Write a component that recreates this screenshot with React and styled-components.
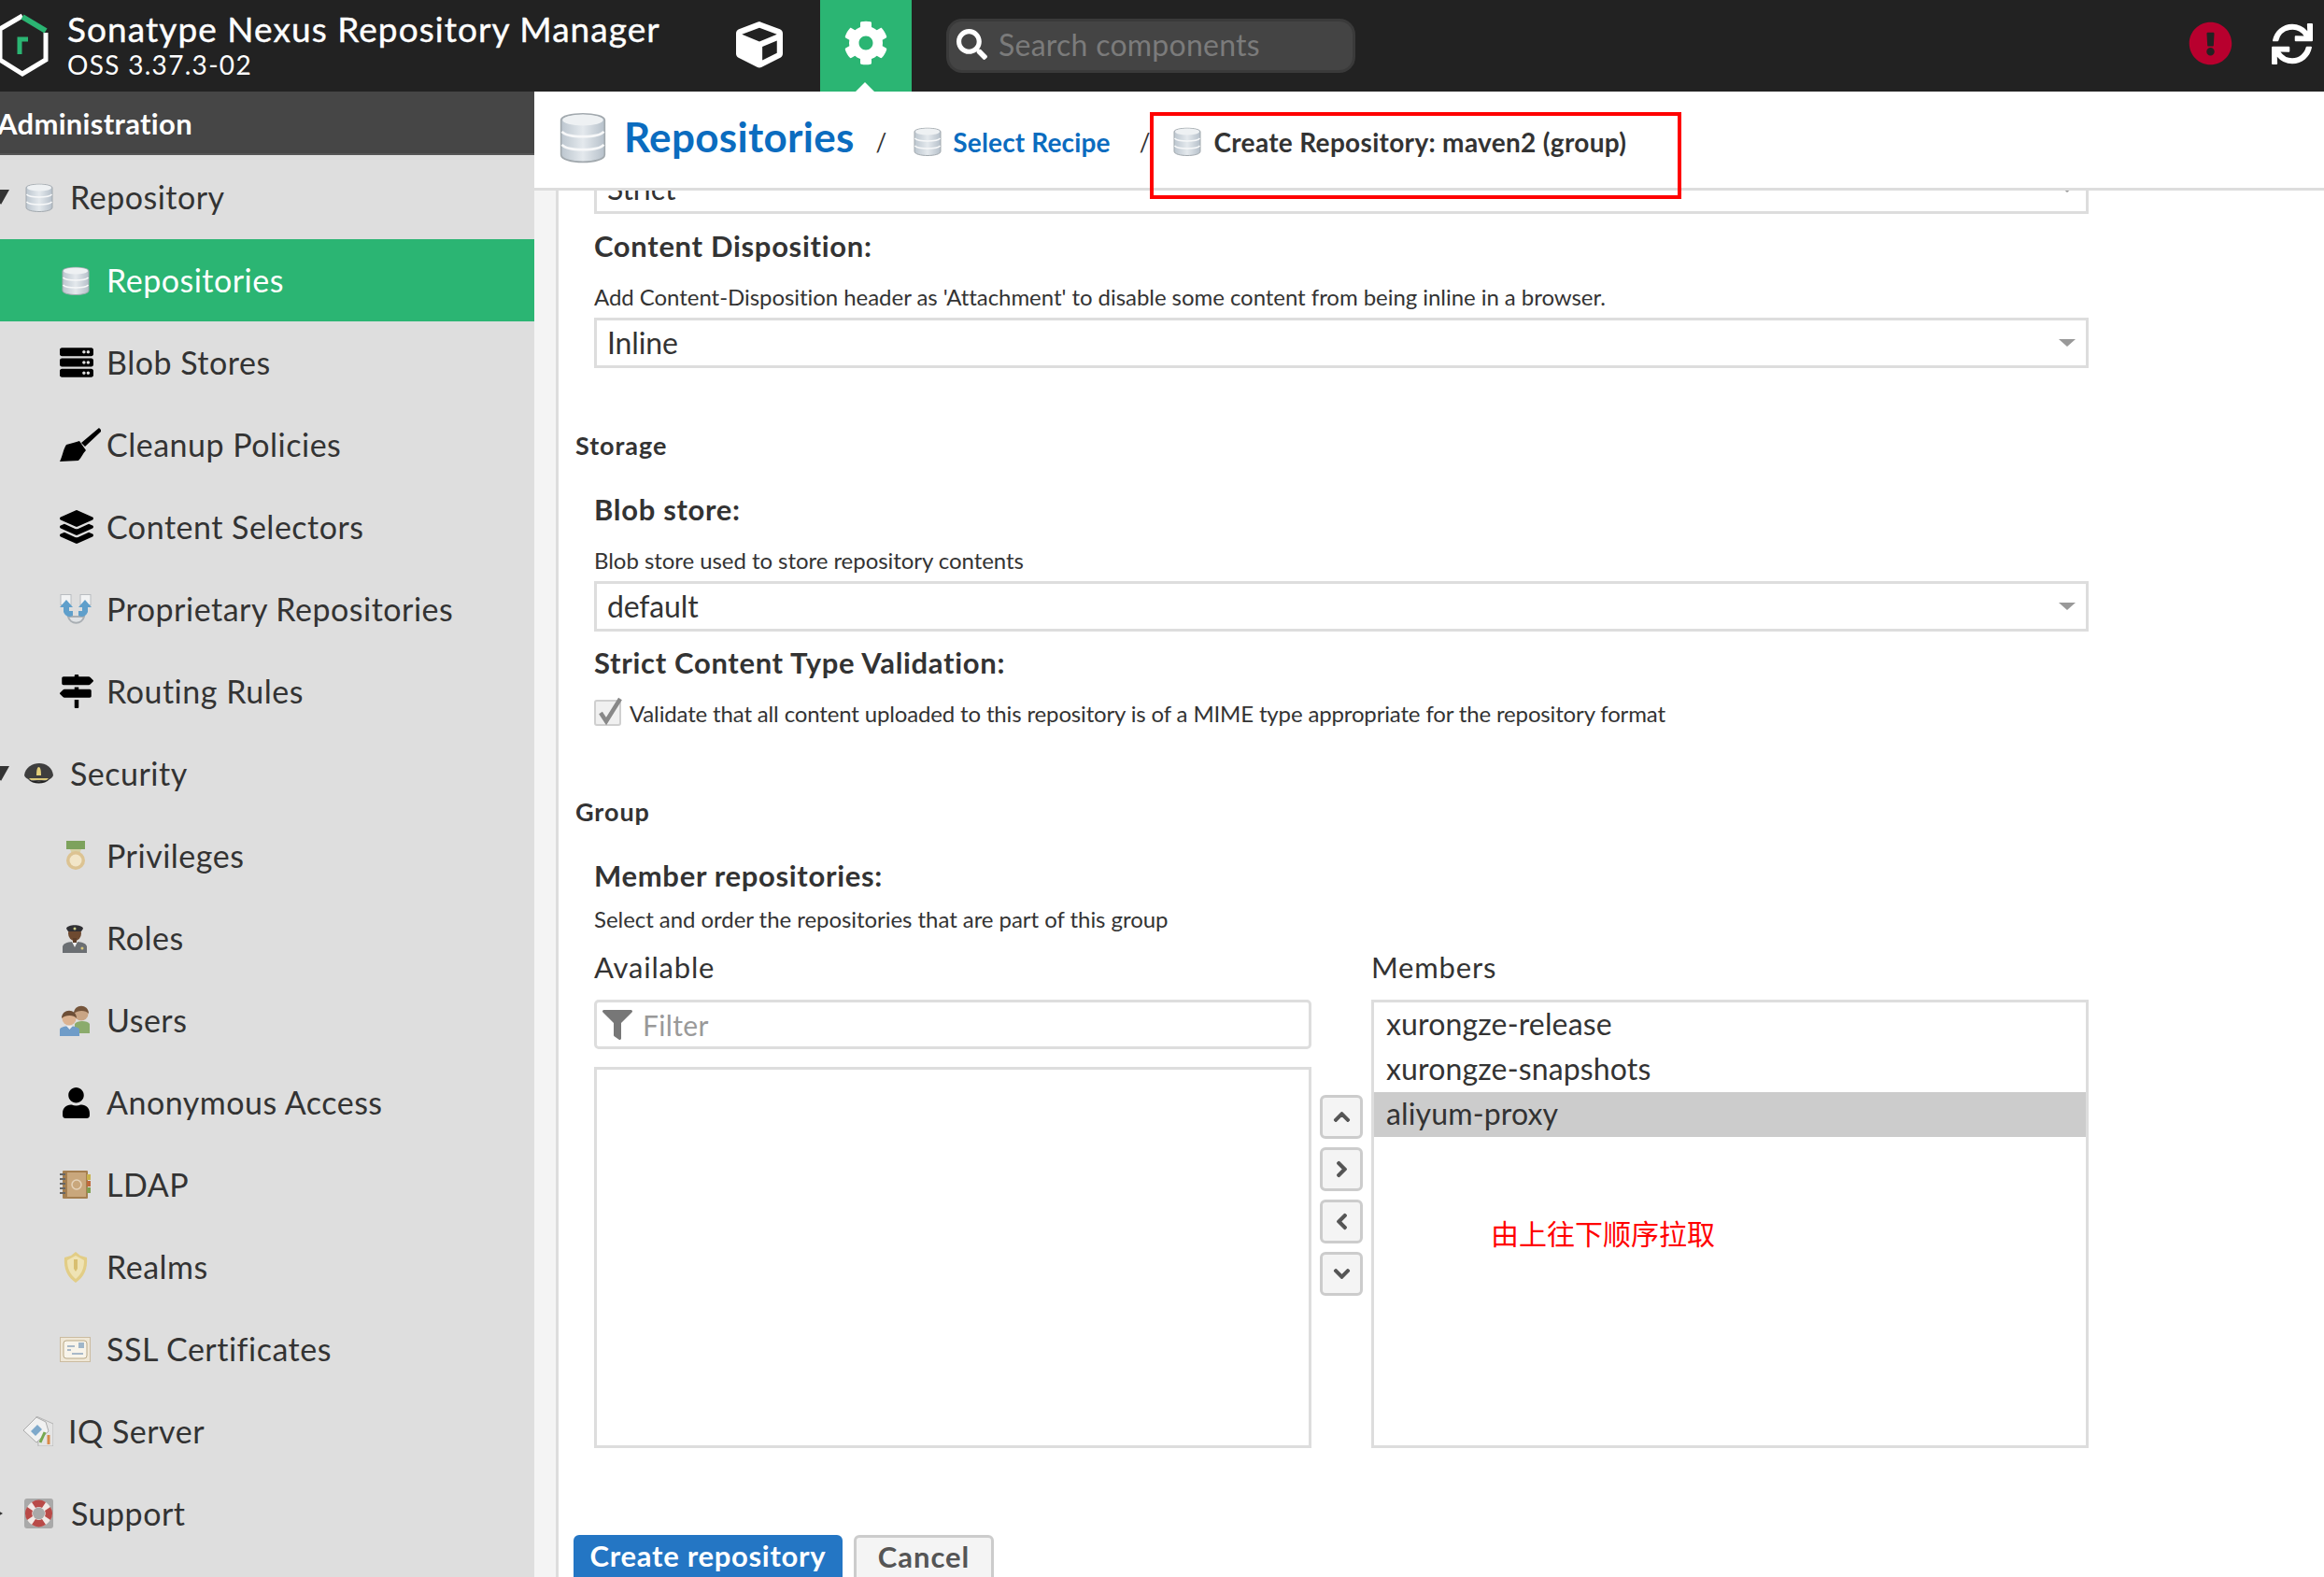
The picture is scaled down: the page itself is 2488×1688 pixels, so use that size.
import React from "react";
import styled, { createGlobalStyle } from "styled-components";
import {
  FaCube, FaCog, FaSearch, FaExclamationCircle, FaSync, FaFilter, FaServer,
  FaLayerGroup, FaMapSigns, FaUser, FaChevronUp, FaChevronDown, FaChevronLeft, FaChevronRight,
} from "react-icons/fa";

const FONT = `Lato, "Noto Sans CJK SC", sans-serif`;

const Global = createGlobalStyle`
  html, body { margin: 0; padding: 0; width: 2488px; height: 1688px; overflow: hidden; background: #fff; }
  body { font-family: ${FONT}; color: #333; }
  #root { width: 2488px; height: 1688px; }
  * { box-sizing: border-box; }
`;

const Page = styled.div`
  position: relative; width: 2488px; height: 1688px; display: flex; flex-direction: column; overflow: hidden;
`;
const TopBar = styled.header`
  height: 98px; flex: none; background: #222; display: flex; align-items: center; color: #fff;
`;
const Brand = styled.div`
  width: 785px; display: flex; align-items: center; gap: 17px; margin-left: -3px; flex: none;
`;
const BrandText = styled.div`
  display: flex; flex-direction: column; margin-top: -6px;
`;
const BrandTitle = styled.div`
  font-size: 37px; line-height: 46px; letter-spacing: 1.06px; font-weight: 400; -webkit-text-stroke: 0.4px #fff;
`;
const BrandVersion = styled.div`
  font-size: 28px; line-height: 30px; letter-spacing: 1.3px;
`;
const NavCube = styled.div`
  width: 93px; height: 98px; display: flex; align-items: center; justify-content: center; font-size: 50px; margin: 0 19px 0 -16px; padding-bottom: 2px;
`;
const NavGear = styled.div`
  position: relative; width: 98px; height: 98px; background: #2bb573; display: flex; align-items: center; justify-content: center;
  font-size: 48px; padding-bottom: 6px;
  &::after {
    content: ""; position: absolute; left: 38px; bottom: 0; border-left: 10px solid transparent; border-right: 10px solid transparent; border-bottom: 10px solid #fff;
  }
`;
const Search = styled.div`
  margin: -1px 0 0 37px; width: 438px; height: 58px; background: #444; border: 3px solid #3a3a3a; border-radius: 17px;
  display: flex; align-items: center; padding: 0 0 2px 8px; gap: 12px; font-size: 32px; color: #7b7b7b; letter-spacing: 0.25px;
  svg { color: #fff; flex: none; }
`;
const TopRight = styled.div`
  margin-left: auto; display: flex; align-items: center; gap: 42px; padding: 0 12px 5px 0;
`;
const AlertIcon = styled(FaExclamationCircle)`
  color: #b8002e; width: 47px; height: 47px; display: block;
`;
const SyncIcon = styled(FaSync)`
  color: #fff; width: 44px; height: 44px; display: block;
`;

const Body = styled.div`
  flex: 1; display: flex; min-height: 0;
`;
const Sidebar = styled.nav`
  width: 572px; flex: none; background: #dedede; overflow: hidden;
`;
const SideHead = styled.div`
  height: 68px; background: #464646; border-bottom: 2px solid #555; color: #fff; font-size: 31px; font-weight: 700; display: flex; align-items: center; padding-top: 2px; text-indent: -3px; letter-spacing: 0.3px;
`;
const Row = styled.div`
  height: ${p => p.$h || 88}px; display: flex; align-items: center; font-size: 34px; letter-spacing: 0.5px;
  padding-left: ${p => (p.$child ? 64 : 0)}px;
  color: ${p => (p.$active ? "#fff" : "#333")};
  background: ${p => (p.$active ? "#2bb573" : "transparent")};
`;
const RowLabel = styled.span`
  margin-top: -2px;
`;
const Caret = styled.span`
  flex: none; width: 0; height: 0; margin-left: -8px; margin-right: 15px; border-left: 9.5px solid transparent; border-right: 9.5px solid transparent; border-top: 16px solid #333;
`;
const CaretRight = styled.span`
  flex: none; width: 0; height: 0; margin-left: -6px; margin-right: 23px; border-top: 5px solid transparent; border-bottom: 5px solid transparent; border-left: 9px solid #333;
`;
const Spacer = styled.span`
  flex: none; width: ${p => p.$w}px;
`;
const Slot = styled.span`
  flex: none; width: ${p => p.$w || 50}px; display: flex; align-items: center; padding-left: ${p => p.$pad || 0}px;
  svg { display: block; flex: none; }
`;

const Main = styled.main`
  flex: 1; min-width: 0; display: flex; flex-direction: column;
`;
const Crumbs = styled.div`
  height: 106px; flex: none; border-bottom: 3px solid #ddd; display: flex; align-items: center; padding: 4px 0 0 27px; background: #fff; position: relative; z-index: 1;
`;
const BigIcon = styled.span`
  display: flex; margin-bottom: 9px;
`;
const CrumbTitle = styled.span`
  font-size: 44px; font-weight: 700; color: #0b6cbf; margin-left: 19px; letter-spacing: 0.3px; margin-top: -12px;
`;
const Slash = styled.span`
  font-size: 26px; color: #333; margin: 0 ${p => p.$r}px 0 ${p => p.$l}px; font-style: normal;
`;
const CrumbLink = styled.span`
  font-size: 28px; font-weight: 700; color: #0b6cbf; margin-left: 12px; letter-spacing: 0.15px;
`;
const CrumbNow = styled.span`
  font-size: 28px; font-weight: 700; color: #333; margin-left: 13px; letter-spacing: 0.32px;
`;
const Work = styled.div`
  flex: 1; min-height: 0; display: flex; overflow: hidden;
`;
const Gutter = styled.div`
  width: 26px; flex: none; background: #f4f4f4; border-right: 3px solid #ddd;
`;
const Form = styled.form`
  flex: 1; min-width: 0; padding-left: 38px; display: flex; flex-direction: column; align-items: flex-start;
`;
const SelectBox = styled.div`
  position: relative; flex: none; width: 1600px; height: 54px; margin-top: ${p => p.$mt}px; border: 3px solid #ddd; background: #fff;
  display: flex; align-items: center; padding: 0 0 2px 11px; font-size: 32px; letter-spacing: -0.15px; color: #333;
  &::after {
    content: ""; position: absolute; right: 11px; top: 20px; border-left: 9px solid transparent; border-right: 9px solid transparent; border-top: 8px solid #999;
  }
`;
const Label = styled.div`
  height: 40px; line-height: 38px; font-size: 31px; font-weight: 700; letter-spacing: 0.68px; margin-top: ${p => p.$mt}px; flex: none;
`;
const Help = styled.div`
  height: 32px; line-height: 32px; font-size: 24px; letter-spacing: -0.05px; margin-top: ${p => p.$mt}px; flex: none;
`;
const Section = styled.div`
  height: 36px; line-height: 36px; font-size: 27px; font-weight: 700; letter-spacing: 0.95px; margin-left: -20px; margin-top: ${p => p.$mt}px; flex: none;
`;
const CheckRow = styled.div`
  height: 32px; display: flex; align-items: center; gap: 9px; font-size: 24px; letter-spacing: -0.15px; margin-top: 17px; flex: none;
`;
const CheckBox = styled.span`
  position: relative; width: 29px; height: 28px; flex: none; background: #f0f0f0; border: 2px solid #cfcfcf; border-radius: 3px;
  svg { position: absolute; left: -1px; top: -6px; }
`;
const Picker = styled.div`
  display: flex; margin-top: 16px; flex: none; width: 1600px;
`;
const Column = styled.div`
  width: ${p => p.$w}px; flex: none; display: flex; flex-direction: column;
`;
const ColTitle = styled.div`
  height: 40px; line-height: 38px; font-size: 31px; letter-spacing: 0.8px; margin-bottom: 14px;
`;
const FilterBox = styled.div`
  height: 53px; border: 3px solid #ddd; border-radius: 5px; display: flex; align-items: center; padding-left: 6px; gap: 11px; font-size: 30px; letter-spacing: 0.35px; color: #999; background: #fff;
  svg { color: #777; flex: none; }
`;
const ListBox = styled.div`
  height: ${p => p.$h}px; margin-top: ${p => p.$mt || 0}px; border: 3px solid #ddd; background: #fff;
`;
const ListItem = styled.div`
  height: 48px; line-height: 45px; padding-left: 13px; font-size: 32px; letter-spacing: 0.15px; color: #333;
  background: ${p => (p.$on ? "#ccc" : "transparent")};
`;
const Arrows = styled.div`
  width: 46px; flex: none; margin: 156px 9px 0 9px; display: flex; flex-direction: column; gap: 9px;
`;
const ArrowBtn = styled.button`
  width: 46px; height: 47px; padding: 0; border: 3px solid #ccc; border-radius: 6px; background: #f4f4f4; color: #555; display: flex; align-items: center; justify-content: center; font-size: 19px;
  svg { stroke: currentColor; stroke-width: 30px; }
`;
const Actions = styled.div`
  display: flex; gap: 12px; margin-top: 93px; margin-left: -22px; flex: none;
`;
const Primary = styled.button`
  width: 288px; height: 62px; border: none; border-radius: 6px; background: #2476c4; color: #fff; font: 700 31px ${FONT}; letter-spacing: 0.7px; padding: 0 0 18px;
`;
const Secondary = styled.button`
  width: 150px; height: 62px; border: 3px solid #ccc; border-radius: 6px; background: #f4f4f4; color: #555; font: 700 31px ${FONT}; letter-spacing: 1px; padding: 0 0 16px;
`;
const RedFrame = styled.div`
  position: absolute; left: 1231px; top: 120px; width: 569px; height: 93px; border: 4px solid #f00; z-index: 3;
`;
const RedNote = styled.div`
  position: absolute; left: 1596px; top: 1300px; font-size: 30px; line-height: 38px; color: #f00; z-index: 3;
  font-family: "Noto Sans CJK SC", sans-serif;
`;

const Logo = () => (
  <svg width="58" height="70" viewBox="0 0 58 70" fill="none">
    <path d="M27 3 L3 17 V50 L27 65 L52 50 V21" stroke="#fff" strokeWidth="5" />
    <path d="M27 4 L52 19" stroke="#2bb573" strokeWidth="6" />
    <path d="M24 44 V28 H33" stroke="#2bb573" strokeWidth="5" />
  </svg>
);

const Db = ({ w = 30, h = 33 }) => (
  <svg width={w} height={h} viewBox="0 0 30 33" preserveAspectRatio="none">
    <defs>
      <linearGradient id="dbg" x1="0" x2="1" y1="0" y2="0">
        <stop offset="0" stopColor="#bcc6cf" />
        <stop offset="0.5" stopColor="#e4e9ed" />
        <stop offset="1" stopColor="#b6c0ca" />
      </linearGradient>
    </defs>
    <path d="M1 6 C1 1 29 1 29 6 V27 C29 33 1 33 1 27 Z" fill="url(#dbg)" stroke="#a2a9ae" strokeWidth="1" />
    <ellipse cx="15" cy="6" rx="13" ry="3.4" fill="#eef1f3" />
    <path d="M1.5 13 C5 17 25 17 28.5 13 M1.5 21 C5 25 25 25 28.5 21" stroke="#f7f8f9" strokeWidth="1.6" fill="none" />
  </svg>
);
const Broom = () => (
  <svg width="44" height="36" viewBox="0 0 44 36">
    <path d="M42 0 L45 3 L27 20 L23 16Z" fill="#000" />
    <path d="M0 36 C3 30 4 22 7 18 C12 17 17 15 21 14 L28 24 C25 27 23 32 20 35 C14 35 6 36 0 36Z" fill="#000" />
  </svg>
);
const Ldap = () => (
  <svg width="33" height="32" viewBox="0 0 33 32">
    <rect x="3" y="1" width="27" height="30" rx="1" fill="#a57f50" />
    <rect x="8" y="3" width="20" height="26" fill="#c9a77c" />
    <rect x="29" y="5" width="4" height="6" fill="#c9b24d" /><rect x="29" y="12" width="4" height="6" fill="#bf6a3c" /><rect x="29" y="19" width="4" height="6" fill="#7f9e4e" />
    <path d="M0 5h6M0 10h6M0 15h6M0 20h6M0 25h6" stroke="#666" strokeWidth="2" />
    <circle cx="18" cy="16" r="5" fill="none" stroke="#e5d3ba" strokeWidth="1.5" />
  </svg>
);
const Proprietary = () => (
  <svg width="34" height="32" viewBox="0 0 34 32">
    <rect x="1" y="0.5" width="11" height="11" fill="#f2f3f4" stroke="#b8bcc0" />
    <rect x="22" y="0.5" width="11" height="11" fill="#f2f3f4" stroke="#b8bcc0" />
    <path d="M9 24 C11 33 24 33 26 24 Z" fill="#dfe2e5" stroke="#a9aeb3" strokeWidth="2" />
    <path d="M7 6 L0 14 H4 V19 C6 24 10 25 14 23 V18 H10 V14 H14 Z" fill="#5f9fcb" />
    <path d="M27 6 L34 14 H30 V19 C28 24 24 25 20 23 V18 H24 V14 H20 Z" fill="#5f9fcb" />
  </svg>
);
const Cap = () => (
  <svg width="33" height="24" viewBox="0 0 33 24">
    <path d="M1 14 C2 5 10 1 17 1 C24 1 31 5 32 14 C30 19 24 20 17 20 C10 20 3 19 1 14Z" fill="#3e3e3e" />
    <path d="M5 18 C10 24 23 24 28 18 C22 21 11 21 5 18Z" fill="#222" />
    <path d="M6 17 H27 L25 19 H8 Z" fill="#d9c77a" />
    <path d="M14 14 C14 8 15 5 16.5 5 C18 5 19 8 19 14 Z" fill="#e3cf7a" />
  </svg>
);
const Medal = () => (
  <svg width="22" height="32" viewBox="0 0 22 32">
    <rect x="1" y="0" width="20" height="9" fill="#7da25c" />
    <path d="M5 9 L7 14 H15 L17 9Z" fill="#d8d2a6" />
    <circle cx="11" cy="21" r="10" fill="#dcc392" />
    <circle cx="11" cy="21" r="6.5" fill="#f2e6c8" />
  </svg>
);
const Roles = () => (
  <svg width="28" height="32" viewBox="0 0 28 32">
    <path d="M1 32 V25 C2 21 8 20 14 20 C20 20 26 21 27 25 V32Z" fill="#6b6f73" />
    <path d="M11 20 L14 26 L17 20Z" fill="#eee" />
    <circle cx="22" cy="27" r="1.5" fill="#d9c77a" />
    <ellipse cx="14" cy="11" rx="7" ry="8" fill="#6e4a30" />
    <rect x="12" y="16" width="4" height="5" fill="#5e3f2a" />
    <path d="M5 6 C6 1 22 1 23 6 L21 9 H7Z" fill="#2f2f33" />
    <circle cx="14" cy="6" r="1.5" fill="#cfcf8a" />
  </svg>
);
const Users = () => (
  <svg width="33" height="33" viewBox="0 0 33 33">
    <path d="M16 30 V20 C18 16 30 16 32 20 V30Z" fill="#8bab6c" />
    <circle cx="23" cy="9" r="7.5" fill="#c9a585" />
    <path d="M15 9 C15 -2 31 -2 31 9 C28 5 19 5 15 9Z" fill="#75553b" />
    <path d="M0 33 V26 C1 21 19 21 21 26 V33Z" fill="#6f9cc8" />
    <path d="M7 22 L10.5 26 L14 22Z" fill="#eee" />
    <circle cx="10" cy="14" r="7.5" fill="#dcb391" />
    <path d="M2 14 C2 3 18 3 18 14 C15 10 6 10 2 14Z" fill="#6e4f37" />
  </svg>
);
const Shield = () => (
  <svg width="26" height="33" viewBox="0 0 26 33">
    <path d="M13 0 L18 4 L25 6 C26 18 22 27 13 33 C4 27 0 18 1 6 L8 4Z" fill="#e2cd86" />
    <path d="M13 4 L22 9 C22 18 19 24 13 29 C7 24 4 18 4 9Z" fill="#efe3b4" />
    <path d="M11 8 H15 V18 L13 21 L11 18Z" fill="#d8bf70" />
  </svg>
);
const Cert = () => (
  <svg width="33" height="27" viewBox="0 0 33 27">
    <rect x="0.5" y="0.5" width="32" height="26" fill="#efe7d6" stroke="#cbbba0" />
    <rect x="4" y="4" width="25" height="19" rx="3" fill="#f8f4ea" stroke="#b9a987" />
    <rect x="20" y="6" width="6" height="6" fill="#9fb6c9" />
    <path d="M8 10h8M8 14h4M13 18h12" stroke="#8ea5bd" strokeWidth="1.6" />
  </svg>
);
const Tag = () => (
  <svg width="32" height="32" viewBox="0 0 32 32">
    <path d="M14 0 L32 8 V32 H16 Z" fill="#e4e4e4" stroke="#b4b4b4" />
    <path d="M0 15 L14 1 L24 6 L27 16 L14 28 Z" fill="#f1f1f1" stroke="#aaa" />
    <path d="M8 16 L15 9 L20 14 L13 21Z" fill="#7fa9cb" />
    <path d="M18 28 L23 17" stroke="#76a84f" strokeWidth="3" />
    <path d="M27 30 V20" stroke="#d98a4a" strokeWidth="3" />
  </svg>
);
const Buoy = () => (
  <svg width="31" height="32" viewBox="0 0 31 32">
    <rect x="0" y="0" width="31" height="32" rx="3" fill="#a9a9a9" />
    <circle cx="15.5" cy="16" r="14" fill="#f1e9e6" />
    <circle cx="15.5" cy="16" r="6.5" fill="#a9a9a9" />
    <path d="M8 4 A14 14 0 0 1 23 4 L19 10 A7 7 0 0 0 12 10Z M8 28 A14 14 0 0 0 23 28 L19 22 A7 7 0 0 1 12 22Z M3 9 A14 14 0 0 0 3 23 L9 19 A7 7 0 0 1 9 13Z M28 9 A14 14 0 0 1 28 23 L22 19 A7 7 0 0 0 22 13Z" fill="#b94a48" />
  </svg>
);

const BlackIcon = styled.span`
  display: flex; color: #000;
`;

const NavItem = ({ icon, children, pad, ...rest }) => (
  <Row $child {...rest}>
    <Slot $pad={pad}>{icon}</Slot>
    <RowLabel>{children}</RowLabel>
  </Row>
);

export default function App() {
  return (
    <Page>
      <Global />
      <TopBar>
        <Brand>
          <Logo />
          <BrandText>
            <BrandTitle>Sonatype Nexus Repository Manager</BrandTitle>
            <BrandVersion>OSS 3.37.3-02</BrandVersion>
          </BrandText>
        </Brand>
        <NavCube><FaCube /></NavCube>
        <NavGear><FaCog /></NavGear>
        <Search><FaSearch size={33} /><span>Search components</span></Search>
        <TopRight>
          <AlertIcon />
          <SyncIcon />
        </TopRight>
      </TopBar>
      <Body>
        <Sidebar>
          <SideHead>Administration</SideHead>
          <Row $h={90}><Caret /><Slot><Spacer $w={2} /><Db /></Slot><RowLabel>Repository</RowLabel></Row>
          <NavItem $active pad={2} icon={<Db />}>Repositories</NavItem>
          <NavItem icon={<BlackIcon><FaServer size={36} /></BlackIcon>}>Blob Stores</NavItem>
          <NavItem icon={<BlackIcon><Broom /></BlackIcon>}>Cleanup Policies</NavItem>
          <NavItem icon={<BlackIcon><FaLayerGroup size={36} /></BlackIcon>}>Content Selectors</NavItem>
          <NavItem icon={<Proprietary />}>Proprietary Repositories</NavItem>
          <NavItem icon={<BlackIcon><FaMapSigns size={36} /></BlackIcon>}>Routing Rules</NavItem>
          <Row><Caret /><Slot><Cap /></Slot><RowLabel>Security</RowLabel></Row>
          <NavItem pad={6} icon={<Medal />}>Privileges</NavItem>
          <NavItem pad={2} icon={<Roles />}>Roles</NavItem>
          <NavItem icon={<Users />}>Users</NavItem>
          <NavItem pad={1} icon={<BlackIcon><FaUser size={33} /></BlackIcon>}>Anonymous Access</NavItem>
          <NavItem icon={<Ldap />}>LDAP</NavItem>
          <NavItem pad={4} icon={<Shield />}>Realms</NavItem>
          <NavItem icon={<Cert />}>SSL Certificates</NavItem>
          <Row><Spacer $w={25} /><Slot $w={48}><Tag /></Slot><RowLabel>IQ Server</RowLabel></Row>
          <Row><CaretRight /><Slot><Buoy /></Slot><RowLabel>Support</RowLabel></Row>
        </Sidebar>
        <Main>
          <Crumbs>
            <BigIcon><Db w={50} h={58} /></BigIcon>
            <CrumbTitle>Repositories</CrumbTitle>
            <Slash $l={23} $r={29}>/</Slash>
            <Db />
            <CrumbLink>Select Recipe</CrumbLink>
            <Slash $l={31} $r={25}>/</Slash>
            <Db />
            <CrumbNow>Create Repository: maven2 (group)</CrumbNow>
          </Crumbs>
          <Work>
            <Gutter />
            <Form>
              <SelectBox $mt={-29}>Strict</SelectBox>
              <Label $mt={15}>Content Disposition:</Label>
              <Help $mt={18}>Add Content-Disposition header as 'Attachment' to disable some content from being inline in a browser.</Help>
              <SelectBox $mt={6}>Inline</SelectBox>
              <Section $mt={65}>Storage</Section>
              <Label $mt={31}>Blob store:</Label>
              <Help $mt={18}>Blob store used to store repository contents</Help>
              <SelectBox $mt={6}>default</SelectBox>
              <Label $mt={14}>Strict Content Type Validation:</Label>
              <CheckRow>
                <CheckBox>
                  <svg width="30" height="32" viewBox="0 0 30 32"><path d="M6 18 L12 27 L27 3" fill="none" stroke="#888" strokeWidth="4.5" /></svg>
                </CheckBox>
                Validate that all content uploaded to this repository is of a MIME type appropriate for the repository format
              </CheckRow>
              <Section $mt={72}>Group</Section>
              <Label $mt={31}>Member repositories:</Label>
              <Help $mt={10}>Select and order the repositories that are part of this group</Help>
              <Picker>
                <Column $w={768}>
                  <ColTitle>Available</ColTitle>
                  <FilterBox><FaFilter size={32} /><span>Filter</span></FilterBox>
                  <ListBox $h={408} $mt={19} />
                </Column>
                <Arrows>
                  <ArrowBtn type="button"><FaChevronUp /></ArrowBtn>
                  <ArrowBtn type="button"><FaChevronRight /></ArrowBtn>
                  <ArrowBtn type="button"><FaChevronLeft /></ArrowBtn>
                  <ArrowBtn type="button"><FaChevronDown /></ArrowBtn>
                </Arrows>
                <Column $w={768}>
                  <ColTitle>Members</ColTitle>
                  <ListBox $h={480}>
                    <ListItem>xurongze-release</ListItem>
                    <ListItem>xurongze-snapshots</ListItem>
                    <ListItem $on>aliyum-proxy</ListItem>
                  </ListBox>
                </Column>
              </Picker>
              <Actions>
                <Primary type="button">Create repository</Primary>
                <Secondary type="button">Cancel</Secondary>
              </Actions>
            </Form>
          </Work>
        </Main>
      </Body>
      <RedFrame />
      <RedNote>由上往下顺序拉取</RedNote>
    </Page>
  );
}
